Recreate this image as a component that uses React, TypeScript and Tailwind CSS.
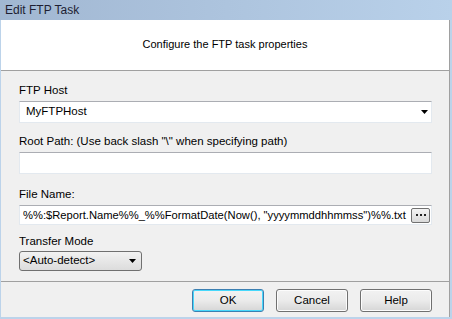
import React from 'react';

const font = { fontFamily: '"Segoe UI", "Liberation Sans", Arial, sans-serif' };

function DropArrow() {
  return (
    <svg width="7" height="4" viewBox="0 0 7 4" className="shrink-0">
      <path d="M0 0h7L3.5 4z" fill="#000" />
    </svg>
  );
}

function DialogButton({ label, focused }: { label: string; focused?: boolean }) {
  return (
    <button
      className={
        'w-[72px] h-[23px] rounded-[3px] border text-[11.5px] text-black bg-gradient-to-b from-[#f2f2f2] via-[#ebebeb] to-[#d6d6d6] ' +
        (focused ? 'border-[#3c7fb1] shadow-[inset_0_0_0_1px_#48d8fb]' : 'border-[#707070] shadow-[inset_0_0_0_1px_#fcfcfc]')
      }
    >
      {label}
    </button>
  );
}

export default function App() {
  return (
    <div className="w-[452px] h-[319px] bg-[#bcd3ea] flex flex-col overflow-hidden text-[11.5px]" style={font}>
      {/* title bar */}
      <div className="h-[20px] shrink-0 flex items-center pl-[5px] text-[12px] text-[#1e1e32] bg-gradient-to-r from-[#a1b7d2] to-[#b9d1ea]">
        Edit FTP Task
      </div>

      <div className="flex flex-1 pl-[1px] pr-[2px] pb-[2px]">
        <div className="w-[449px] flex flex-col border-r border-[#a0a0a0] bg-[#f0f0f0]">
          {/* header */}
          <div className="h-[51px] shrink-0 bg-white border-b border-[#a0a0a0] flex items-center justify-center pb-[1px] text-black text-[11px]">
            Configure the FTP task properties
          </div>

          {/* fields */}
          <div className="flex-1 pl-[18px] pr-[17px] text-black">
            <div className="mt-[11px] leading-[16px]">FTP Host</div>
            <div className="mt-[3px] h-[22px] bg-white border border-[#e3e9ef] border-t-[#abadb3] flex items-center pl-[6px] pr-[3px] justify-between">
              <span>MyFTPHost</span>
              <DropArrow />
            </div>

            <div className="mt-[10px] leading-[16px]">Root Path: (Use back slash "\" when specifying path)</div>
            <div className="mt-[3px] h-[22px] bg-white border border-[#e3e9ef] border-t-[#abadb3]" />

            <div className="mt-[12px] leading-[16px]">File Name:</div>
            <div className="mt-[3px] h-[20px] bg-white border border-[#e3e9ef] border-t-[#abadb3] flex items-center pl-[3px] pr-[1px] gap-[1px]">
              <span className="flex-1 min-w-0 overflow-hidden whitespace-nowrap text-[11.2px]">%%:$Report.Name%%_%%FormatDate(Now(), "yyyymmddhhmmss")%%.txt</span>
              <div className="shrink-0 w-[19px] h-[15px] rounded-[2px] border border-[#707070] bg-gradient-to-b from-[#f4f4f4] to-[#d9d9d9] flex items-center justify-center gap-[2px]">
                <span className="w-[2px] h-[2px] bg-[#222]" />
                <span className="w-[2px] h-[2px] bg-[#222]" />
                <span className="w-[2px] h-[2px] bg-[#222]" />
              </div>
            </div>

            <div className="mt-[8px] leading-[16px]">Transfer Mode</div>
            <div className="mt-[2px] w-[123px] h-[20px] rounded-[3px] border border-[#707070] bg-gradient-to-b from-[#f2f2f2] to-[#dcdcdc] flex items-center justify-between pl-[3px] pr-[5px]">
              <span>&lt;Auto-detect&gt;</span>
              <DropArrow />
            </div>
          </div>

          {/* buttons */}
          <div className="h-[36px] shrink-0 border-t border-[#a0a0a0] flex justify-end items-start pt-[7px] pr-[17px] gap-[12px]">
            <DialogButton label="OK" focused />
            <DialogButton label="Cancel" />
            <DialogButton label="Help" />
          </div>
        </div>
      </div>
    </div>
  );
}
